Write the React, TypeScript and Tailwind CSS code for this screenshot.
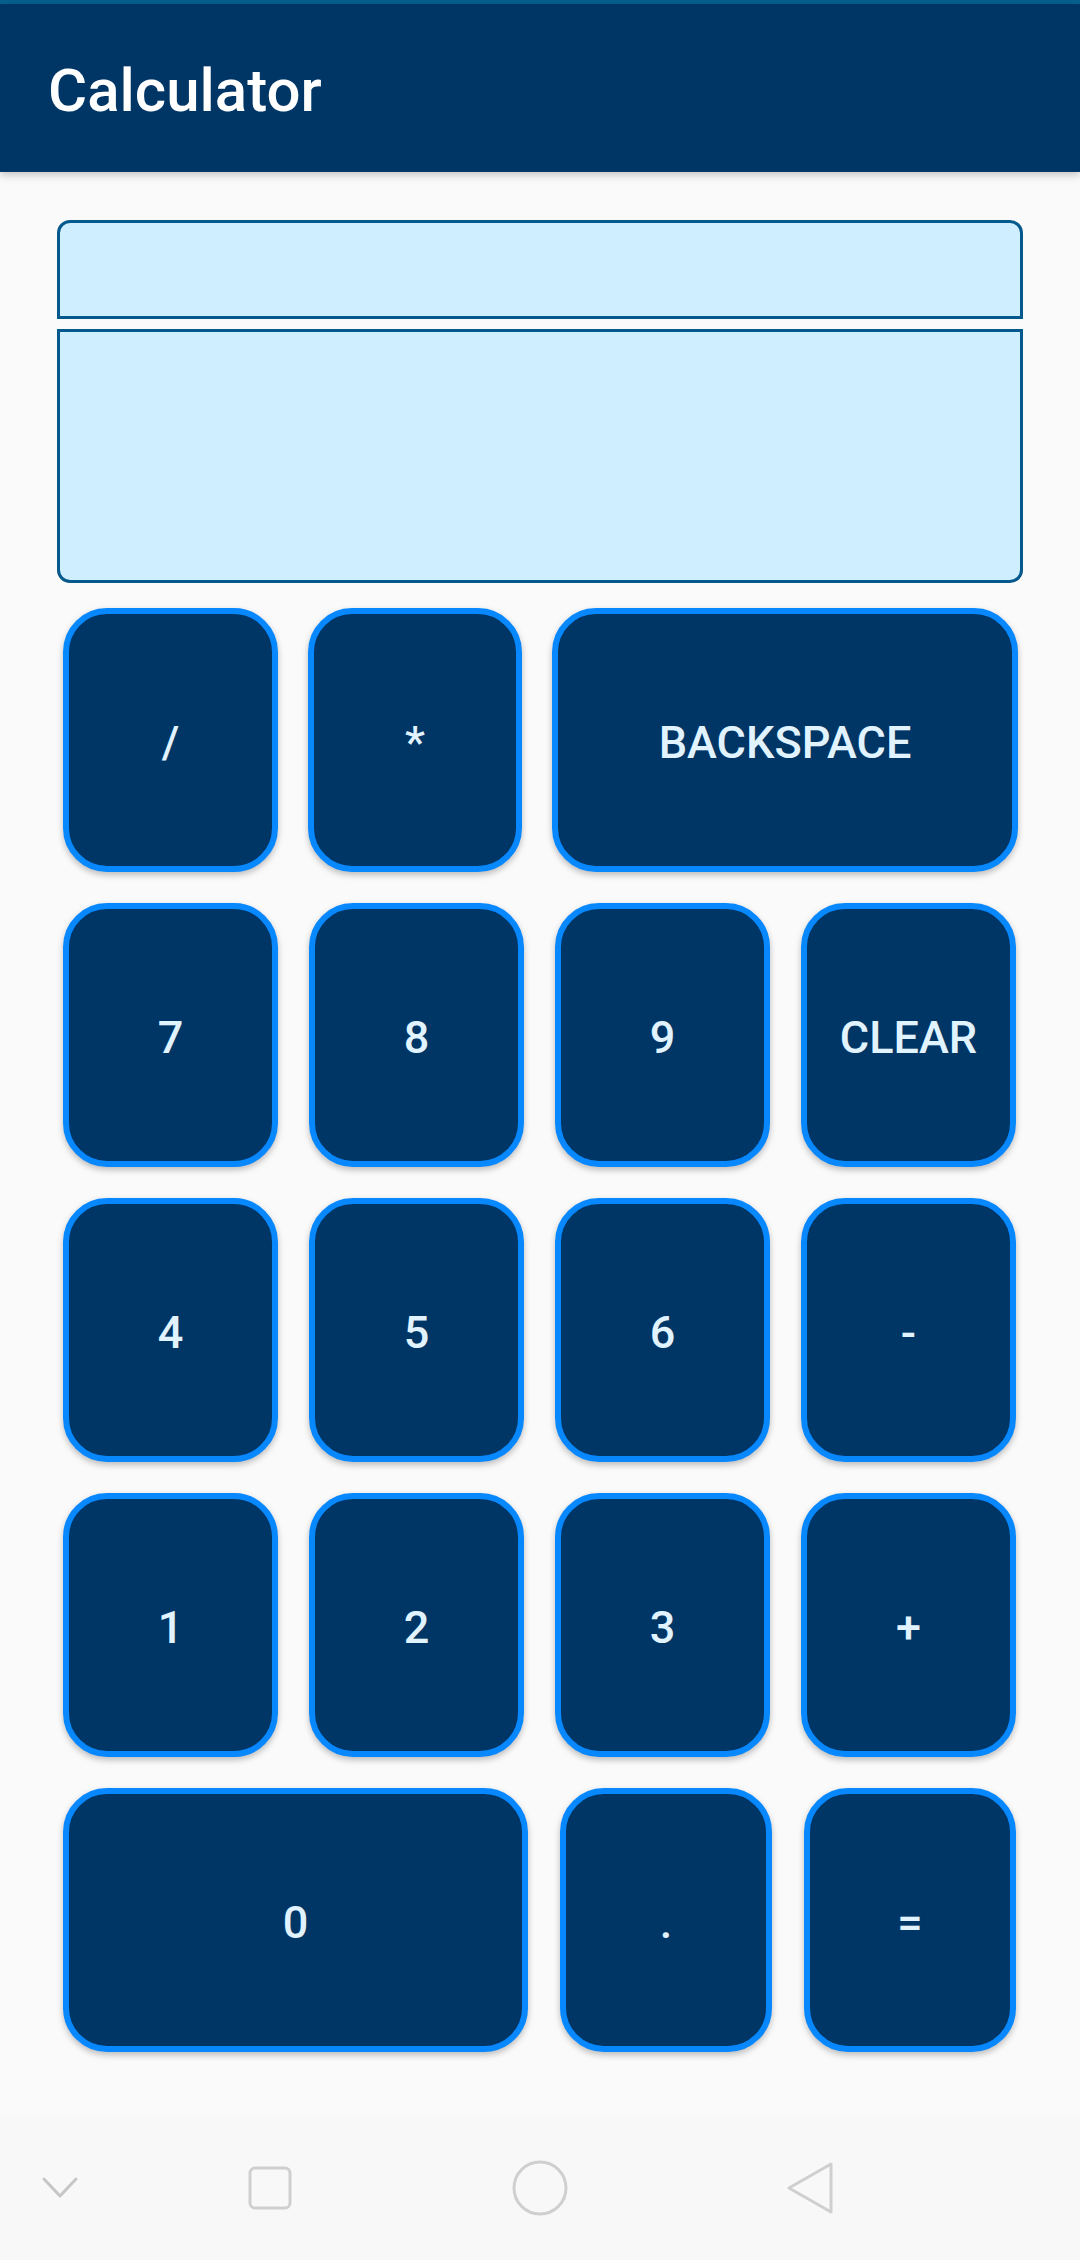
import React from "react";

const btn =
  "h-[264px] shrink-0 flex items-center justify-center pt-[5px] bg-[#003665] border-[6px] border-[#0788ff] rounded-[44px] text-[#e1f3ff] text-[45px] font-medium leading-none shadow-[0_3px_6px_rgba(0,0,0,0.25)]";

function Key({ label, w }: { label: string; w: string }) {
  return <div className={`${btn} ${w}`}>{label}</div>;
}

export default function App() {
  return (
    <div className="w-[1080px] h-[2260px] bg-[#fafafa] flex flex-col font-['Roboto',sans-serif] overflow-hidden">
      <div className="h-[4px] bg-[#06608e]" />
      <div className="h-[168px] bg-[#003665] flex items-center pl-[48px] shadow-[0_3px_8px_rgba(0,0,0,0.22)] relative z-10">
        <div className="text-white text-[60px] font-medium leading-[60px] mt-[6px]">Calculator</div>
      </div>

      <div className="pt-[48px] pl-[57px] flex flex-col">
        <div className="w-[966px] h-[99px] bg-[#cfeeff] border-[3px] border-[#03598b] rounded-t-[13px]" />
        <div className="w-[966px] h-[254px] mt-[10px] bg-[#cfeeff] border-[3px] border-[#03598b] rounded-b-[13px]" />
      </div>

      <div className="pt-[25px] pl-[63px] flex flex-col gap-[31px]">
        <div className="flex gap-[30px]">
          <Key label="/" w="w-[215px]" />
          <Key label="*" w="w-[214px]" />
          <Key label="BACKSPACE" w="w-[466px]" />
        </div>
        <div className="flex gap-[31px]">
          <Key label="7" w="w-[215px]" />
          <Key label="8" w="w-[215px]" />
          <Key label="9" w="w-[215px]" />
          <Key label="CLEAR" w="w-[215px]" />
        </div>
        <div className="flex gap-[31px]">
          <Key label="4" w="w-[215px]" />
          <Key label="5" w="w-[215px]" />
          <Key label="6" w="w-[215px]" />
          <Key label="-" w="w-[215px]" />
        </div>
        <div className="flex gap-[31px]">
          <Key label="1" w="w-[215px]" />
          <Key label="2" w="w-[215px]" />
          <Key label="3" w="w-[215px]" />
          <Key label="+" w="w-[215px]" />
        </div>
        <div className="flex gap-[32px]">
          <Key label="0" w="w-[465px]" />
          <Key label="." w="w-[212px]" />
          <Key label="=" w="w-[212px]" />
        </div>
      </div>

      <div className="mt-auto h-[144px] bg-[#f8f8f8] flex items-center">
        <div className="w-[120px] flex justify-center">
          <svg width="36" height="22" viewBox="0 0 36 22" fill="none">
            <polyline points="2,2 18,19 34,2" stroke="#c6c6c6" strokeWidth="3" strokeLinecap="round" strokeLinejoin="round" />
          </svg>
        </div>
        <div className="w-[300px] flex justify-center">
          <svg width="44" height="44" viewBox="0 0 44 44" fill="none">
            <rect x="2" y="2" width="40" height="40" rx="5" stroke="#cfcfcf" strokeWidth="3" />
          </svg>
        </div>
        <div className="w-[240px] flex justify-center">
          <svg width="56" height="56" viewBox="0 0 56 56" fill="none">
            <circle cx="28" cy="28" r="26" stroke="#cfcfcf" strokeWidth="3" />
          </svg>
        </div>
        <div className="w-[300px] flex justify-center">
          <svg width="48" height="54" viewBox="0 0 48 54" fill="none">
            <path d="M45 3 L45 51 L3 27 Z" stroke="#cfcfcf" strokeWidth="3" strokeLinejoin="round" />
          </svg>
        </div>
      </div>
    </div>
  );
}
